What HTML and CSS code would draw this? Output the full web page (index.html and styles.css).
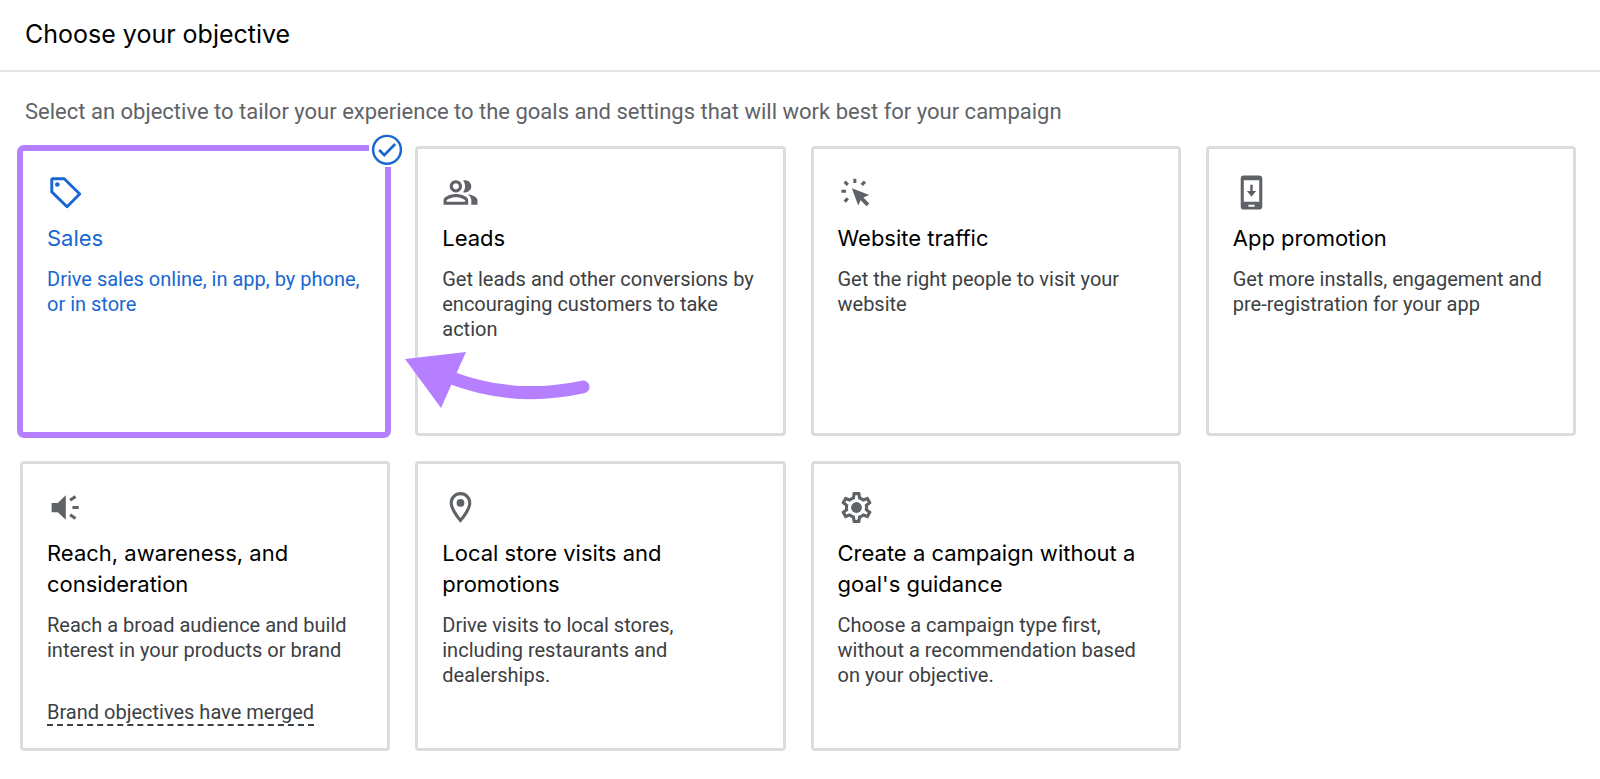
FILE: index.html
```html
<!DOCTYPE html>
<html lang="en">
<head>
<meta charset="utf-8">
<title>Choose your objective</title>
<meta name="viewport" content="width=device-width, initial-scale=1">
<link rel="stylesheet" href="styles.css">
</head>
<body>
<header class="header">
  <h1 class="header-title">Choose your objective</h1>
</header>
<main class="main">
  <p class="intro">Select an objective to tailor your experience to the goals and settings that will work best for your campaign</p>
  <ul class="grid">
    <li class="item">
      <button type="button" class="card card-selected" aria-pressed="true">
        <svg class="icon" viewBox="0 0 24 24" aria-hidden="true"><path fill="none" stroke="currentColor" stroke-width="1.9" stroke-linejoin="round" d="M3.500 3.100H11.200L21.200 13 13 21.200 3.100 11.600V3.500Z"/><circle cx="6.700" cy="6.800" r="1.500" fill="currentColor"/></svg>
        <span class="card-title">Sales</span>
        <span class="card-text">Drive sales online, in app, by phone, or in store</span>
      </button>
      <span class="badge">
        <svg class="badge-icon" viewBox="0 0 36 36" aria-hidden="true"><g fill="none" stroke="currentColor" stroke-width="2.500"><circle cx="18" cy="18.300" r="14.300"/><path stroke-width="2.800" d="M10 18.600 15.200 23.800 26.400 12.400"/></g></svg>
      </span>
      <svg class="arrow" viewBox="0 0 190 60" aria-hidden="true"><path fill="currentColor" d="M0 8 61 1 36 57Z"/><path fill="none" stroke="currentColor" stroke-width="13" stroke-linecap="round" d="M44 26Q108 51 178 36"/></svg>
    </li>
    <li class="item">
      <button type="button" class="card" aria-pressed="false">
        <svg class="icon" viewBox="0 0 24 24" aria-hidden="true"><path fill="currentColor" d="M9 12c2.210 0 4-1.790 4-4s-1.790-4-4-4-4 1.790-4 4 1.790 4 4 4zm0-6c1.100 0 2 .9 2 2s-.9 2-2 2-2-.9-2-2 .9-2 2-2zM9 13c-2.670 0-8 1.340-8 4v3h16v-3c0-2.660-5.330-4-8-4zm6 5H3v-.99C3.200 16.290 6.300 15 9 15s5.800 1.290 6 2v1zM15 12c2.210 0 4-1.790 4-4s-1.790-4-4-4c-.47 0-.91.1-1.330.24C14.500 5.270 15 6.580 15 8s-.5 2.730-1.330 3.760c.42.14.86.24 1.330.24zM16.670 13.130C18.040 14.060 19 15.320 19 17v3h4v-3c0-2.180-3.580-3.470-6.330-3.870z"/></svg>
        <span class="card-title">Leads</span>
        <span class="card-text">Get leads and other conversions by encouraging customers to take action</span>
      </button>
    </li>
    <li class="item">
      <button type="button" class="card" aria-pressed="false">
        <svg class="icon" viewBox="0 0 24 24" aria-hidden="true"><path fill="currentColor" d="M9 9.200 20.300 13.600 16.500 15.300 20.300 19.100 18.500 20.900 14.700 17.100 13.100 20.500Z"/><path fill="none" stroke="currentColor" stroke-width="2" d="M10.900 3V5.800M2.200 11.200H5.200M4.300 4.900 6.400 7M17.500 4.900 15.400 7M4.300 17.900 6.400 15.800"/></svg>
        <span class="card-title">Website traffic</span>
        <span class="card-text">Get the right people to visit your website</span>
      </button>
    </li>
    <li class="item">
      <button type="button" class="card" aria-pressed="false">
        <svg class="icon" viewBox="0 0 24 24" aria-hidden="true"><path fill="currentColor" fill-rule="evenodd" d="M7 1H17Q19 1 19 3V21Q19 23 17 23H7Q5 23 5 21V3Q5 1 7 1ZM7 4V18H17V4ZM10 20V21.200H14V20Z"/><path fill="currentColor" d="M11.200 7H12.800V11H15L12 14.800 9 11H11.200Z"/></svg>
        <span class="card-title">App promotion</span>
        <span class="card-text">Get more installs, engagement and pre-registration for your app</span>
      </button>
    </li>
    <li class="item">
      <button type="button" class="card" aria-pressed="false">
        <svg class="icon" viewBox="0 0 24 24" aria-hidden="true"><path fill="currentColor" d="M3 9H7L12.200 4V20L7 15H3Z"/><path fill="none" stroke="currentColor" stroke-width="2" d="M16.500 12H20.600M15 7.300 18.500 4.900M15 16.700 18.500 19.200"/></svg>
        <span class="card-title">Reach, awareness, and consideration</span>
        <span class="card-text">Reach a broad audience and build interest in your products or brand</span>
        <span class="card-note">Brand objectives have merged</span>
      </button>
    </li>
    <li class="item">
      <button type="button" class="card" aria-pressed="false">
        <svg class="icon" viewBox="0 0 24 24" aria-hidden="true"><path fill="currentColor" d="M12 2C8.130 2 5 5.130 5 9c0 5.250 7 13 7 13s7-7.750 7-13c0-3.870-3.130-7-7-7zM7 9c0-2.760 2.240-5 5-5s5 2.240 5 5c0 2.880-2.880 7.190-5 9.880C9.920 16.210 7 11.850 7 9z"/><circle cx="12" cy="9" r="2.500" fill="currentColor"/></svg>
        <span class="card-title">Local store visits and promotions</span>
        <span class="card-text">Drive visits to local stores, including restaurants and dealerships.</span>
      </button>
    </li>
    <li class="item">
      <button type="button" class="card" aria-pressed="false">
        <svg class="icon" viewBox="0 0 24 24" aria-hidden="true"><path fill="currentColor" d="M19.430 12.980c.04-.32.07-.64.07-.98s-.03-.66-.07-.98l2.110-1.650c.19-.15.24-.42.12-.64l-2-3.460c-.09-.16-.26-.25-.44-.25-.06 0-.12.01-.17.03l-2.490 1c-.52-.4-1.080-.73-1.690-.98l-.38-2.650C14.460 2.180 14.250 2 14 2h-4c-.25 0-.46.18-.49.42l-.38 2.650c-.61.25-1.170.59-1.690.98l-2.490-1c-.06-.02-.12-.03-.18-.03-.17 0-.34.09-.43.25l-2 3.460c-.13.22-.07.49.12.64l2.110 1.650c-.04.32-.07.65-.07.98s.03.66.07.98l-2.110 1.650c-.19.15-.24.42-.12.64l2 3.460c.09.16.26.25.44.25.06 0 .12-.01.17-.03l2.490-1c.52.4 1.080.73 1.690.98l.38 2.650c.03.24.24.42.49.42h4c.25 0 .46-.18.49-.42l.38-2.650c.61-.25 1.170-.59 1.690-.98l2.490 1c.06.02.12.03.18.03.17 0 .34-.09.43-.25l2-3.460c.12-.22.07-.49-.12-.64l-2.110-1.650zm-1.980-1.710c.04.31.05.52.05.73s-.02.43-.05.73l-.14 1.130.89.7 1.080.84-.7 1.210-1.270-.51-1.040-.42-.9.68c-.43.32-.84.56-1.250.73l-1.060.43-.16 1.130-.2 1.350h-1.400l-.19-1.350-.16-1.130-1.060-.43c-.43-.18-.83-.41-1.230-.71l-.91-.7-1.060.43-1.270.51-.7-1.210 1.080-.84.89-.7-.14-1.130c-.03-.31-.05-.54-.05-.74s.02-.43.05-.73l.14-1.130-.89-.7-1.080-.84.7-1.210 1.270.51 1.040.42.9-.68c.43-.32.84-.56 1.250-.73l1.060-.43.16-1.130.2-1.350h1.390l.19 1.350.16 1.130 1.060.43c.43.18.83.41 1.230.71l.91.7 1.060-.43 1.270-.51.7 1.210-1.070.85-.89.7.14 1.130z"/><circle cx="12" cy="12" r="3.500" fill="currentColor"/></svg>
        <span class="card-title">Create a campaign without a goal's guidance</span>
        <span class="card-text">Choose a campaign type first, without a recommendation based on your objective.</span>
      </button>
    </li>
  </ul>
</main>
</body>
</html>
```
FILE: styles.css
```css
* {
  box-sizing: border-box;
}

body {
  margin: 0;
  background: #fff;
  color: #202124;
  font-family: Roboto, "Liberation Sans", sans-serif;
}

.header {
  padding: 18px 25px 20px;
  border-bottom: 2px solid #e3e4e6;
}

.header-title {
  margin: 0;
  color: #000;
  font-family: Inter, Roboto, sans-serif;
  font-size: 25px;
  font-weight: 400;
  line-height: 32px;
}

.main {
  padding: 25px 24px 28px 20px;
}

.intro {
  margin: 0 0 19px;
  padding-left: 5px;
  color: #5f6368;
  font-size: 22px;
  line-height: 30px;
}

.grid {
  display: grid;
  grid-template-columns: repeat(4, minmax(0, 1fr));
  grid-auto-rows: minmax(290px, auto);
  gap: 25px;
  margin: 0;
  padding: 0;
  list-style: none;
}

.item {
  display: flex;
  position: relative;
}

.card {
  display: flex;
  flex: 1;
  flex-direction: column;
  align-items: flex-start;
  gap: 12px;
  min-width: 0;
  padding: 25px 24px 18px;
  border: 3px solid #dadce0;
  border-radius: 4px;
  background: #fff;
  color: #3c4043;
  font-family: inherit;
  font-size: 20px;
  line-height: 25px;
  text-align: left;
  cursor: pointer;
}

.card-selected {
  color: #1967d2;
}

.card-selected::after {
  content: "";
  position: absolute;
  inset: -1px -1px -2px -3px;
  border: 6px solid #b57fff;
  border-radius: 7px;
  pointer-events: none;
}

.icon {
  width: 37px;
  height: 37px;
  color: #5f6368;
}

.card-selected .icon,
.card-selected .card-title {
  color: #1967d2;
}

.card-title {
  padding-bottom: 1px;
  color: #000;
  font-family: Inter, Roboto, sans-serif;
  font-size: 22px;
  line-height: 31px;
}

.card-note {
  margin-top: 25px;
  border-bottom: 2px dashed #3c4043;
  line-height: 24px;
}

.badge {
  position: absolute;
  top: -14px;
  right: -15px;
  z-index: 1;
  background: #fff;
  color: #1967d2;
}

.badge-icon {
  display: block;
  width: 36px;
  height: 35px;
}

.arrow {
  position: absolute;
  top: 205px;
  left: calc(100% + 15px);
  z-index: 2;
  width: 190px;
  height: 60px;
  color: #b57fff;
  pointer-events: none;
}
```
